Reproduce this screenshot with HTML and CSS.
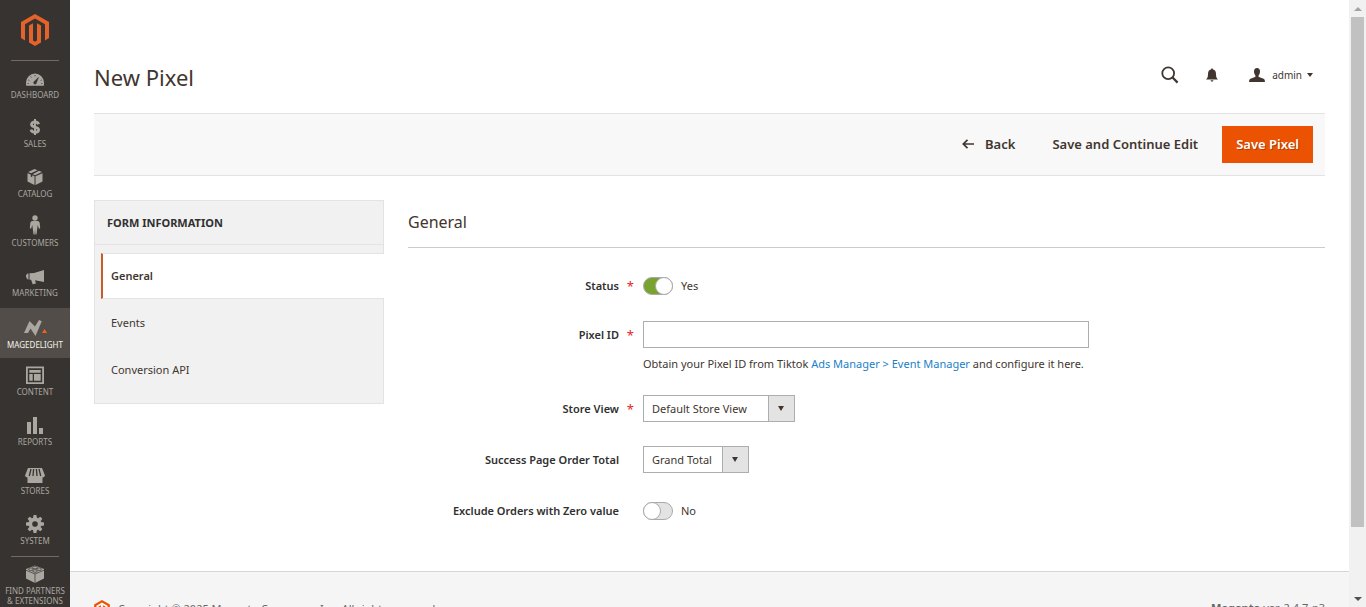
FILE: index.html
```html
<!DOCTYPE html>
<html lang="en">
<head>
<meta charset="utf-8">
<title>New Pixel</title>
<link rel="stylesheet" href="styles.css">
</head>
<body>
<div class="app">
  <nav class="sidebar" aria-label="Main menu">
    <a class="logo" href="#" aria-label="Magento Admin Panel">
      <svg width="28" height="32" viewBox="0 0 28 32"><path fill="#e5622b" d="M14 0 28 8v16l-4 2.400V10.300L14 4.600 4 10.300v16.100L0 24V8zM8 11.500 12 9.200v17.400l2 1.200 2-1.200V9.200l4 2.300v17.100L14 32l-6-3.400z"/></svg>
    </a>
    <ul class="menu">
      <li><a href="#"><svg width="18" height="18" viewBox="0 -1 18 18"><path fill="currentColor" d="M9 3.500a9 9 0 0 0-9 9V15a.8.8 0 0 0 .8.800h16.400A.8.8 0 0 0 18 15v-2.500a9 9 0 0 0-9-9z"/><g stroke="#373330" stroke-width=".8"><path d="M9 5v1.300M4.700 6.500l.7 1M2.300 10l1.100.5M1.500 13.500h1.200M15.300 13.500h1.200M14.600 10.500l1.100-.5"/><path fill="#373330" stroke-width=".3" d="m12.700 7-4.300 4.300a1.500 1.500 0 1 0 2 2z"/></g></svg><span>Dashboard</span></a></li>
      <li class="short"><a href="#"><svg width="18" height="18" viewBox="0 0 18 18"><path fill="none" stroke="currentColor" stroke-width="2.800" d="M12.700 6.300C12 4.700 10.700 4 9 4 6.900 4 5.500 5 5.500 6.500 5.500 10 12.600 8 12.600 11.800c0 1.500-1.500 2.500-3.600 2.500-2 0-3.500-.9-4-2.700"/><path stroke="currentColor" stroke-width="2" d="M9 1v16"/></svg><span>Sales</span></a></li>
      <li><a href="#"><svg width="18" height="18" viewBox="0 0 18 18"><path fill="currentColor" d="m8.500 1 3 1.200L5 5.300l-2.800-1.200zM13 2.800l3 1.300-7 3.200-2.300-1zM1.500 5.200 4.800 6.600v2l1.400.7v-2l2.300 1V17l-7-3.400zM9.500 8.300l7-3.100v8.400l-7 3.400z"/></svg><span>Catalog</span></a></li>
      <li class="short"><a href="#"><svg width="18" height="20" viewBox="0 0 18 20"><circle cx="9" cy="3" r="2.700" fill="currentColor"/><path fill="currentColor" d="M6.500 6h5q2 0 2.200 2l.5 5-1.200 1-1.300-4-.5 4-.7 5.500H9.400L9 14.500l-.4 5H7.500L6.800 14l-.5-4L5 14l-1.200-1 .5-5q.2-2 2.200-2z"/></svg><span>Customers</span></a></li>
      <li><a href="#"><svg width="18" height="18" viewBox="0 -1 18 18"><path fill="currentColor" d="M18 2v12l-9-1.800 1 3.300-3.300.8-1.600-4.600H3.500V5.200L8 5zM2.500 5.400v6L.8 11V9.700L0 9.300V7l.8-.2V5.700z"/></svg><span>Marketing</span></a></li>
      <li class="active"><a href="#"><svg width="24" height="18" viewBox="0 0 24 18"><path fill="currentColor" d="M1 14 6.500 2 12 7.500 16 1l2.800 1.200L12.500 17 7.500 9.500 5 14z"/><path fill="#f26322" d="m21.500 10 2.500 4h-5z"/></svg><span>Magedelight</span></a></li>
      <li class="short"><a href="#"><svg width="18" height="18" viewBox="0 0 18 18"><path fill="currentColor" fill-rule="evenodd" d="M0 .500h18v17.500H0zM1.800 2.300v13.900h14.400V2.300zM3.300 4h11.400v2.700H3.300zM3.300 8h3.400v6.700H3.300zM8 8h6.700v6.700H8z"/></svg><span>Content</span></a></li>
      <li><a href="#"><svg width="18" height="18" viewBox="0 0 18 18"><path fill="currentColor" d="M1 6h4v12H1zM7 1h4v17H7zM13 12h4v6h-4z"/></svg><span>Reports</span></a></li>
      <li class="short"><a href="#"><svg width="20" height="18" viewBox="0 -1 20 18"><path fill="currentColor" d="M3 2h14l3 7.500q-.5 2-2.500 2V17h-15v-5.500q-2 0-2.500-2z"/><path stroke="#373330" stroke-width="1.300" d="M6 3 4.300 10M8.600 3 8 10M11.400 3l.6 7M14 3l1.700 7"/></svg><span>Stores</span></a></li>
      <li><a href="#"><svg width="18" height="18" viewBox="0 0 18 18"><g fill="currentColor"><path fill-rule="evenodd" d="M9 2.500a6.500 6.500 0 1 1 0 13 6.500 6.500 0 0 1 0-13zm0 3.700a2.800 2.800 0 1 0 0 5.600 2.800 2.800 0 0 0 0-5.600z"/><path id="cog" d="m7 3 .6-3h2.800l.6 3zM7 15l.6 3h2.800l.6-3z"/><use href="#cog" transform="rotate(45 9 9)"/><use href="#cog" transform="rotate(90 9 9)"/><use href="#cog" transform="rotate(135 9 9)"/></g></svg><span>System</span></a></li>
      <li class="partners"><a href="#"><svg width="20" height="18" viewBox="0 0 20 18"><path fill="currentColor" d="m10 .500 9 3.500v9.500L10 18l-9-4.500V4z"/><path fill="none" stroke="#373330" stroke-width=".7" d="M1 5.200 10 9l9-3.800M10 9v9"/><g fill="#aaa6a0" stroke="#373330" stroke-width=".7"><ellipse cx="10" cy="2.500" rx="2.300" ry="1.300"/><ellipse cx="5.800" cy="4.200" rx="2.300" ry="1.300"/><ellipse cx="14.200" cy="4.200" rx="2.300" ry="1.300"/><ellipse cx="10" cy="6" rx="2.300" ry="1.300"/></g></svg><span>Find Partners<br>&amp; Extensions</span></a></li>
    </ul>
  </nav>

  <div class="page">
    <header class="header">
      <h1>New Pixel</h1>
      <div class="tools">
        <button class="icon-button" aria-label="Search"><svg width="18" height="18" viewBox="0 0 18 18"><circle cx="7.200" cy="7.200" r="5.900" fill="none" stroke="#41362f" stroke-width="1.800"/><path stroke="#41362f" stroke-width="2.200" d="m11.300 11.300 5.300 5.300"/></svg></button>
        <button class="icon-button" aria-label="Notifications"><svg width="12" height="14" viewBox="0 0 12 14"><path fill="#41362f" d="M6 .500c.8 0 1 .5 1 1 2.200.5 3 2.300 3 4.500 0 3 .5 4 2 5.500H0C1.500 10 2 9 2 6c0-2.200.8-4 3-4.500 0-.5.2-1 1-1zM4.500 12.300h3q-.3 1.400-1.500 1.400t-1.500-1.400z"/></svg></button>
        <button class="user"><svg width="16" height="14" viewBox="0 0 16 14"><path fill="#41362f" d="M8 0c2 0 3 1.300 3 3.500 0 2-.7 3-1.400 3.900-.3 1 .1 1.500 1 1.900l4 1.500q1.400.6 1.400 3.200H0q0-2.600 1.400-3.200l4-1.500c.9-.4 1.300-.9 1-1.900C5.700 6.500 5 5.500 5 3.500 5 1.300 6 0 8 0z"/></svg><span>admin</span><i class="caret"></i></button>
      </div>
    </header>

    <div class="actions">
      <button class="action"><svg width="12" height="10" viewBox="0 0 12 10"><path fill="none" stroke="#41362f" stroke-width="1.700" d="M12 5H1.500M5.500.800 1.300 5l4.200 4.200"/></svg>Back</button>
      <button class="action">Save and Continue Edit</button>
      <button class="action primary">Save Pixel</button>
    </div>

    <main class="content">
      <nav class="tabs" aria-label="Form information">
        <h2>Form Information</h2>
        <ul>
          <li class="current"><a href="#">General</a></li>
          <li><a href="#">Events</a></li>
          <li><a href="#">Conversion API</a></li>
        </ul>
      </nav>
      <form class="form">
        <h2>General</h2>
        <div class="field">
          <label class="required" for="status">Status</label>
          <div class="control toggle"><input type="checkbox" id="status" checked><span>Yes</span></div>
        </div>
        <div class="field">
          <label class="required" for="pixel">Pixel ID</label>
          <div class="control"><input class="text" type="text" id="pixel"></div>
          <p class="note">Obtain your Pixel ID from Tiktok <a href="#">Ads Manager &gt; Event Manager</a> and configure it here.</p>
        </div>
        <div class="field">
          <label class="required" for="store">Store View</label>
          <div class="control"><span class="select"><select class="wide" id="store"><option>Default Store View</option></select></span></div>
        </div>
        <div class="field">
          <label for="total">Success Page Order Total</label>
          <div class="control"><span class="select"><select id="total"><option>Grand Total</option></select></span></div>
        </div>
        <div class="field spaced">
          <label for="zero">Exclude Orders with Zero value</label>
          <div class="control toggle"><input type="checkbox" id="zero"><span>No</span></div>
        </div>
      </form>
    </main>

    <footer class="footer">
      <p class="copyright"><svg width="16" height="18" viewBox="0 0 28 32"><path fill="#eb5202" d="M14 0 28 8v16l-4 2.400V10.300L14 4.600 4 10.300v16.100L0 24V8zM8 11.500 12 9.200v17.400l2 1.200 2-1.200V9.200l4 2.300v17.100L14 32l-6-3.400z"/></svg>Copyright © 2025 Magento Commerce Inc. All rights reserved.</p>
      <p><strong>Magento</strong> ver. 2.4.7-p3</p>
    </footer>
  </div>

  <div class="scrollbar" aria-hidden="true">
    <i class="up"></i>
    <div class="track"><div class="thumb"></div></div>
    <i class="down"></i>
  </div>
</div>
</body>
</html>
```
FILE: styles.css
```css
*, *::before, *::after { box-sizing: border-box; }
body, h1, h2, p, ul { margin: 0; padding: 0; }
ul { list-style: none; }
body {
  font: 11px/16px "Noto Sans", "Open Sans", sans-serif;
  color: #41362f;
  background: #fff;
}
button, input, select { font: inherit; color: inherit; }
button { border: 0; background: none; padding: 0; }
a { color: #1a7fc9; text-decoration: none; }
svg { display: block; flex: none; }

.app { display: flex; height: 100vh; overflow: hidden; }

/* Sidebar */
.sidebar { flex: none; width: 70px; background: #373330; overflow: hidden; }
.logo { display: flex; justify-content: center; height: 60px; padding-top: 14px; }
.menu li { height: 50px; }
.menu .short { height: 49px; }
.menu li:first-child, .menu .partners {
  background: linear-gradient(#736963, #736963) center top / 48px 1px no-repeat;
}
.menu a {
  display: flex;
  flex-direction: column;
  align-items: center;
  justify-content: flex-end;
  height: 100%;
  padding-bottom: 10px;
  gap: 3px;
  color: #aaa6a0;
  font-size: 8px;
  line-height: 10px;
  text-align: center;
  text-transform: uppercase;
  white-space: nowrap;
}
.menu .active { background: #524d49; }
.menu .active a { padding-bottom: 8px; }
.menu .active span { color: #f7f3eb; }
.menu .partners { height: auto; }
.menu .partners a { padding-top: 9px; }

/* Page */
.page { flex: 1; min-width: 0; display: flex; flex-direction: column; }
.header {
  flex: none;
  display: flex;
  align-items: flex-end;
  justify-content: space-between;
  height: 113px;
  padding: 0 24px 21px;
}
h1 { font-size: 22px; font-weight: 400; line-height: 30px; }
.tools { display: flex; align-items: center; height: 34px; padding-right: 12px; }
.icon-button { margin-right: 27px; }
.icon-button + .icon-button { margin-right: 31px; }
.user { display: flex; align-items: center; gap: 7px; font-size: 10px; }
.caret { border: 3px solid transparent; border-top: 4px solid #41362f; border-bottom: 0; }
.user .caret { margin-left: -2px; }

.actions {
  flex: none;
  display: flex;
  align-items: center;
  justify-content: flex-end;
  gap: 24px;
  height: 63px;
  margin: 0 24px;
  padding: 0 12px;
  background: #f8f8f8;
  border: solid #e3e3e3;
  border-width: 1px 0;
}
.action {
  display: flex;
  align-items: center;
  gap: 11px;
  height: 37px;
  padding: 0 0 2px 13px;
  font-size: 13px;
  font-weight: 600;
}
.action.primary {
  padding: 0 14px 2px;
  background: #eb5202;
  color: #fff;
  text-shadow: 1px 1px 0 rgba(0, 0, 0, .25);
}

.content { flex: none; display: flex; align-items: flex-start; gap: 24px; padding: 24px 24px 25px; }

/* Tabs */
.tabs { flex: none; width: 290px; padding-bottom: 10px; background: #f1f1f1; border: 1px solid #e3e3e3; }
.tabs h2 {
  padding: 14px 12px;
  border-bottom: 1px solid #e3e3e3;
  font-size: 11px;
  line-height: 15px;
  font-weight: 700;
  color: #303030;
  text-transform: uppercase;
}
.tabs ul { padding: 8px 0 0 6px; }
.tabs a { display: block; padding: 15px 10px; line-height: 17px; color: #41362f; }
.tabs .current {
  margin-right: -1px;
  background: #fff;
  border: solid #e3e3e3;
  border-width: 1px 0 1px 2px;
  border-left-color: #c75c2b;
}
.tabs .current a { padding: 14px 8px; line-height: 16px; font-weight: 600; }

/* Form */
.form { flex: 1; min-width: 0; }
.form h2 {
  height: 48px;
  padding-top: 10px;
  margin-bottom: 26px;
  border-bottom: 1px solid #ccc;
  font-size: 16px;
  line-height: 24px;
  font-weight: 400;
}
.field {
  display: grid;
  grid-template-columns: 211px minmax(0, 1fr);
  column-gap: 24px;
  align-items: center;
  margin-bottom: 24px;
}
.field.spaced { margin-top: 26px; }
.field label { position: relative; text-align: right; font-weight: 600; color: #303030; }
.required::after {
  content: "*";
  position: absolute;
  right: -15px;
  top: 0;
  color: #e22626;
  font-size: 13px;
  font-weight: 400;
}
.control { min-height: 27px; }
.toggle { display: flex; align-items: center; gap: 8px; min-height: 23px; }
.toggle input {
  appearance: none;
  width: 30px;
  height: 18px;
  margin: 0;
  border: 1px solid #aaa;
  border-radius: 9px;
  background: #e3e3e3;
}
.toggle input::before {
  content: "";
  display: block;
  width: 18px;
  height: 18px;
  margin: -1px;
  border: 1px solid #aaa;
  border-radius: 50%;
  background: #fff;
}
.toggle input:checked { background: #79a22e; }
.toggle input:checked::before { margin-left: 11px; }
.text {
  display: block;
  width: 100%;
  max-width: 446px;
  height: 27px;
  padding: 0 8px;
  border: 1px solid #adadad;
}
.note { grid-column: 2; padding-top: 8px; margin-bottom: -1px; }
.select { position: relative; display: inline-block; vertical-align: top; }
.select select {
  appearance: none;
  display: block;
  height: 27px;
  padding: 0 36px 0 8px;
  border: 1px solid #adadad;
  border-radius: 0;
  background: linear-gradient(#adadad, #adadad) right 25px top / 1px 100% no-repeat,
    linear-gradient(#e3e3e3, #e3e3e3) right top / 25px 100% no-repeat #fff;
}
.select .wide { min-width: 152px; }
.select::after {
  content: "";
  position: absolute;
  right: 11px;
  top: 11px;
  border: 3px solid transparent;
  border-top: 5px solid #41362f;
  border-bottom: 0;
  pointer-events: none;
}

/* Footer */
.footer {
  flex: 1 0 auto;
  display: flex;
  align-items: flex-start;
  justify-content: space-between;
  padding: 28px 24px;
  background: #f5f5f5;
  border-top: 1px solid #d6d6d6;
  color: #666;
}
.copyright { display: flex; align-items: center; gap: 8px; }

/* Scroll rail */
.scrollbar {
  flex: none;
  display: flex;
  flex-direction: column;
  align-items: center;
  width: 17px;
  padding: 7px 0 6px;
  background: #f1f1f1;
}
.track { flex: 1; width: 13px; margin: 6px 0 7px; }
.thumb { height: 89%; background: #c1c1c1; }
.up, .down { border: 4px solid transparent; }
.up { border-top: 0; border-bottom-color: #a3a3a3; }
.down { border-bottom: 0; border-top-color: #505050; }
```
